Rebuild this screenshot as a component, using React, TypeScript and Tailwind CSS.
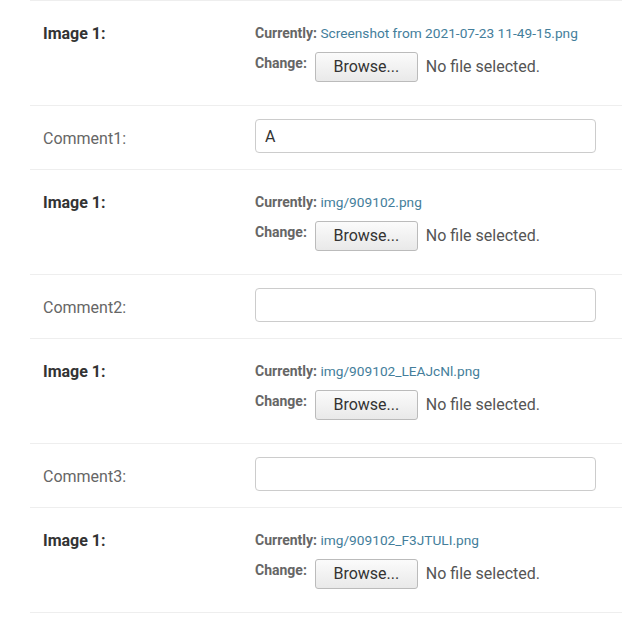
import React from 'react';

type Row =
    | { kind: 'image'; label: string; current: string }
    | { kind: 'comment'; label: string; value: string };

const rows: Row[] = [
    { kind: 'image', label: 'Image 1:', current: 'Screenshot from 2021-07-23 11-49-15.png' },
    { kind: 'comment', label: 'Comment1:', value: 'A' },
    { kind: 'image', label: 'Image 1:', current: 'img/909102.png' },
    { kind: 'comment', label: 'Comment2:', value: '' },
    { kind: 'image', label: 'Image 1:', current: 'img/909102_LEAJcNl.png' },
    { kind: 'comment', label: 'Comment3:', value: '' },
    { kind: 'image', label: 'Image 1:', current: 'img/909102_F3JTULI.png' },
];

const ImageRow = ({ label, current }: { label: string; current: string }) => (
    <div className="flex h-[105px] border-t border-[#eee]">
        <div className="w-[225px] shrink-0 pl-[13px] pt-[21px] text-[16px] leading-[24px] font-bold text-[#333]">
            {label}
        </div>
        <div className="flex flex-col pt-[22px]">
            <p className="text-[14px] leading-[20px] text-[#666]">
                <span className="font-bold">Currently:</span>{' '}
                <a href="#" className="text-[13.7px] text-[#447e9b]">{current}</a>
            </p>
            <div className="mt-[9px] flex items-start">
                <span className="pt-[1px] text-[14px] leading-[20px] font-bold text-[#666]">Change:</span>
                <div className="flex items-center">
                    <button
                        type="button"
                        className="ml-[8px] h-[30px] w-[103px] rounded-[3px] border border-[#bbb] bg-gradient-to-b from-[#fbfbfb] to-[#e9e9e9] text-[16px] text-[#333]"
                    >
                        Browse...
                    </button>
                    <span className="ml-[8px] text-[16px] text-[#555]">No file selected.</span>
                </div>
            </div>
        </div>
    </div>
);

const CommentRow = ({ label, value }: { label: string; value: string }) => (
    <div className="flex h-[64px] items-start border-t border-[#eee]">
        <label className="w-[225px] shrink-0 pl-[13px] pt-[21px] text-[16px] leading-[24px] text-[#666]">{label}</label>
        <input
            type="text"
            defaultValue={value}
            className="mt-[13px] h-[34px] w-[341px] rounded-[4px] border border-[#ccc] bg-white px-[9px] text-[16px] text-[#333] outline-none"
        />
    </div>
);

export default function App() {
    return (
        <div className="min-h-screen bg-white pl-[30px] font-['Roboto',sans-serif]">
            <div className="border-b border-[#eee]">
                {rows.map((row, i) =>
                    row.kind === 'image' ? (
                        <ImageRow key={i} label={row.label} current={row.current} />
                    ) : (
                        <CommentRow key={i} label={row.label} value={row.value} />
                    )
                )}
            </div>
        </div>
    );
}
